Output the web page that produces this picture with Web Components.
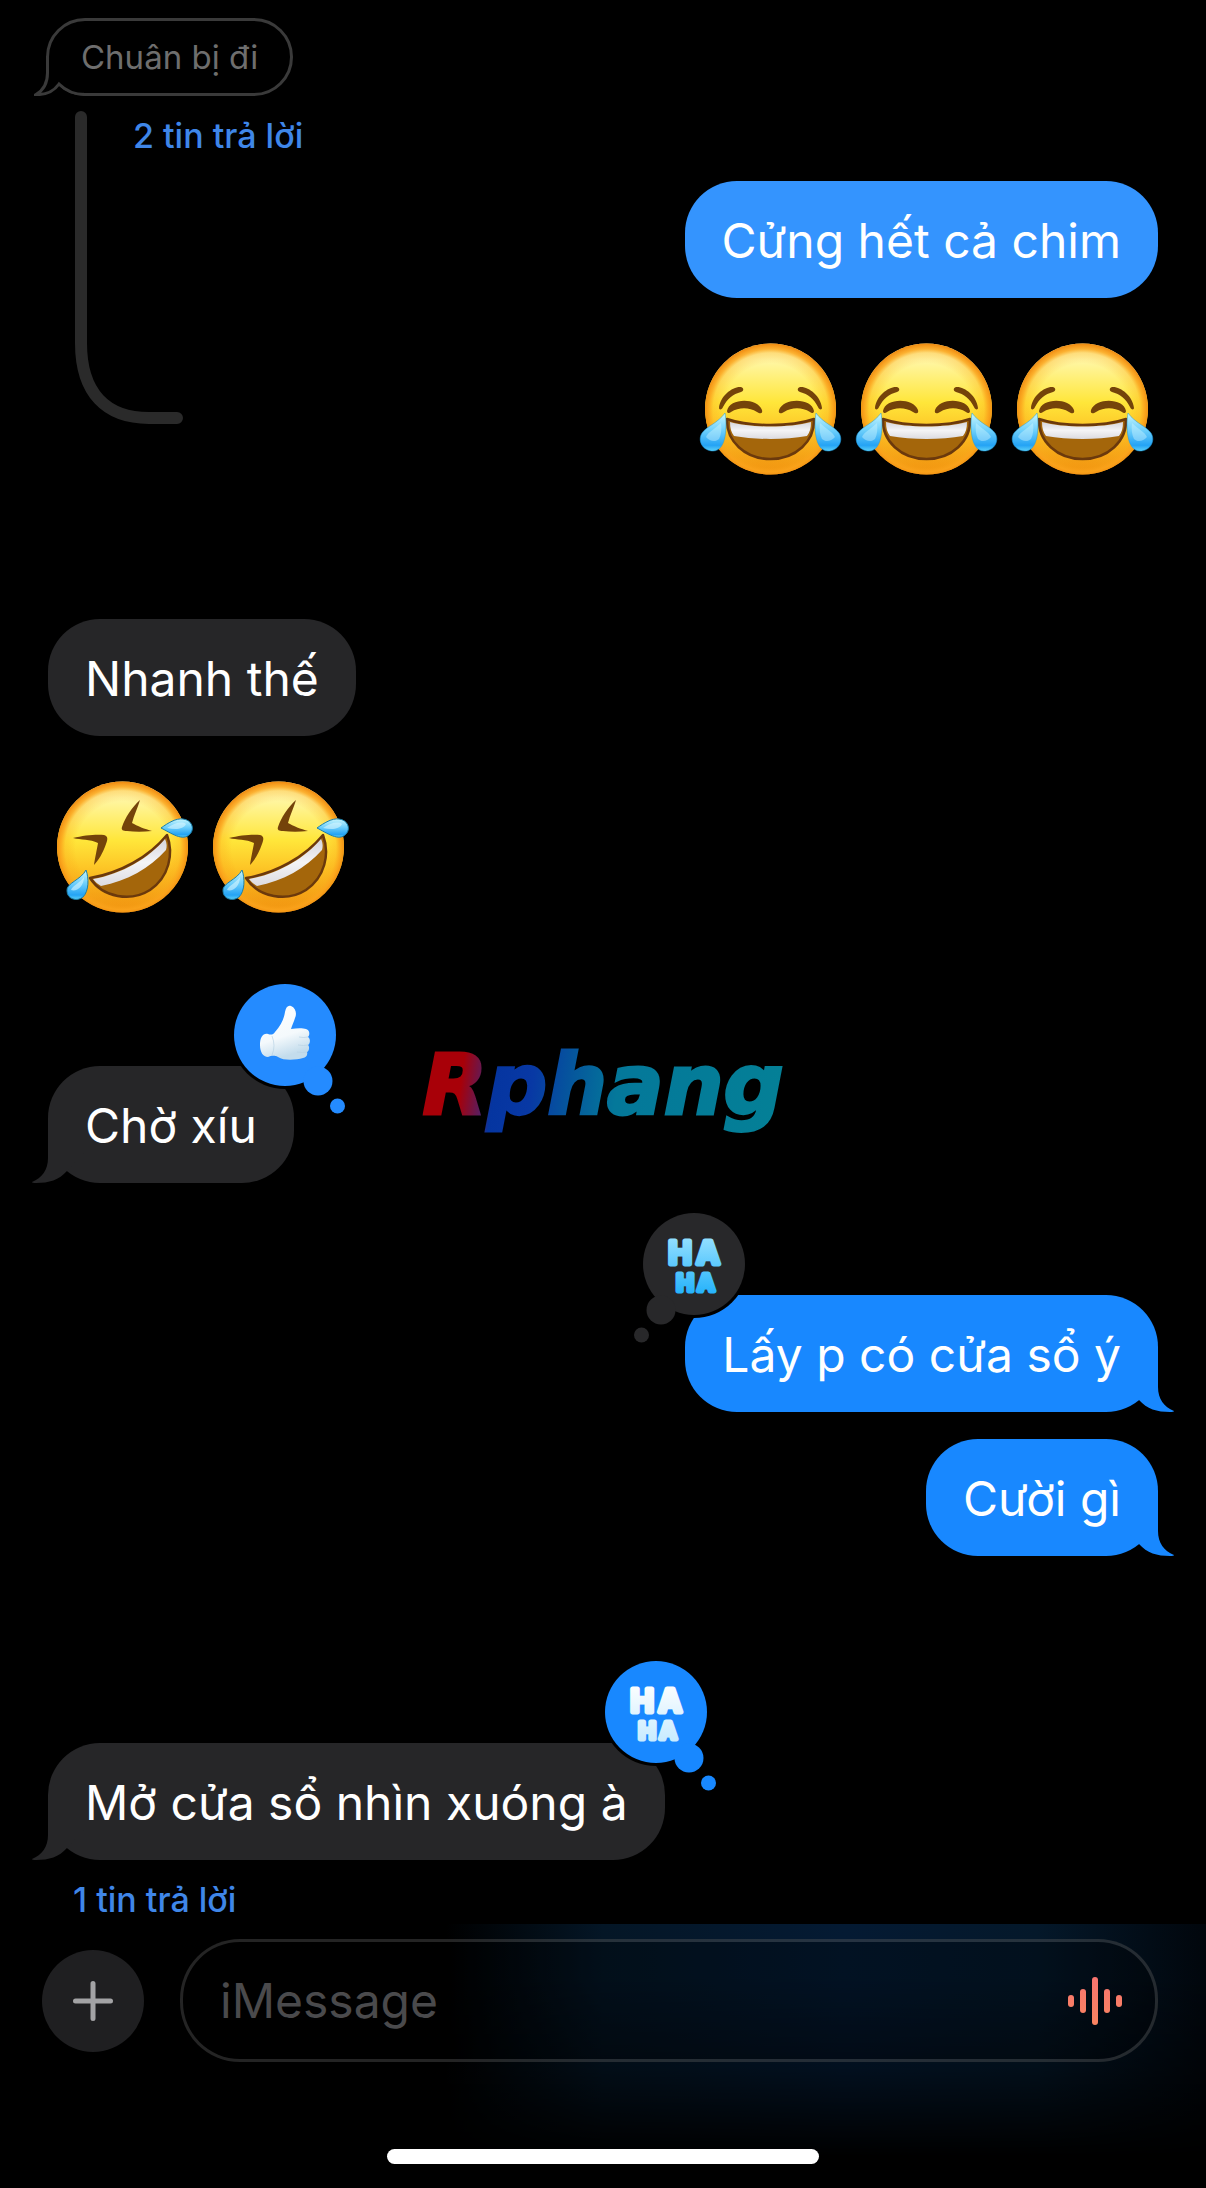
<!DOCTYPE html>
<html lang="vi">
<head>
<meta charset="utf-8">
<meta name="viewport" content="width=device-width, initial-scale=1">
<title>iMessage</title>
<style>
  html, body {
    margin: 0;
    background: #000000;
  }
  body {
    font-family: Inter, "Liberation Sans", sans-serif;
    color: #ffffff;
  }
</style>
</head>
<body>
<chat-screen>
  <chat-quote>Chuân bị đi</chat-quote>
  <chat-thread>
    <chat-note indent="far">2 tin trả lời</chat-note>
    <chat-bubble side="out" tone="light">Cửng hết cả chim</chat-bubble>
    <chat-emoji side="out" face="joy" count="3"></chat-emoji>
  </chat-thread>
  <chat-group space="wide">
    <chat-bubble side="in">Nhanh thế</chat-bubble>
    <chat-emoji side="in" face="rofl" count="2"></chat-emoji>
  </chat-group>
  <chat-group space="wider">
    <chat-bubble side="in" tail>Chờ xíu<chat-tapback slot="tapback" kind="like" side="in"></chat-tapback></chat-bubble>
  </chat-group>
  <chat-group space="normal">
    <chat-bubble side="out" tail>Lấy p có cửa sổ ý<chat-tapback slot="tapback" kind="haha" side="out"></chat-tapback></chat-bubble>
    <chat-bubble side="out" tail>Cười gì</chat-bubble>
  </chat-group>
  <chat-group space="widest">
    <chat-bubble side="in" tail>Mở cửa sổ nhìn xuóng à<chat-tapback slot="tapback" kind="haha" side="in"></chat-tapback></chat-bubble>
    <chat-note>1 tin trả lời</chat-note>
  </chat-group>
  <chat-watermark slot="over">Rphang</chat-watermark>
  <chat-composer slot="footer" placeholder="iMessage"></chat-composer>
</chat-screen>

<script>
(() => {
  const make = (html) => {
    const template = document.createElement('template');
    template.innerHTML = html;
    return template;
  };

  const define = (name, html, setup) => {
    const template = make(html);
    customElements.define(name, class extends HTMLElement {
      constructor() {
        super();
        this.attachShadow({ mode: 'open' });
        this.shadowRoot.appendChild(template.content.cloneNode(true));
      }

      connectedCallback() {
        if (setup) setup(this, this.shadowRoot);
      }
    });
  };

  define('chat-screen', `
    <style>
      :host {
        position: relative;
        display: flex;
        flex-direction: column;
        min-height: 100vh;
        overflow: hidden;
      }
      main {
        display: flex;
        flex-direction: column;
        flex: 1;
        padding: 18px 48px 4px;
      }
    </style>
    <main><slot></slot></main>
    <slot name="over"></slot>
    <slot name="footer"></slot>
  `);

  define('chat-group', `
    <style>
      :host {
        display: flex;
        flex-direction: column;
        margin-top: 112px;
      }
      :host([space="wide"]) { margin-top: 144px; }
      :host([space="wider"]) { margin-top: 153px; }
      :host([space="widest"]) { margin-top: 187px; }
      ::slotted(chat-bubble:not(:first-child)) { margin-top: 27px; }
      ::slotted(chat-note) { margin-top: 20px; }
      ::slotted(chat-emoji) { margin-top: 45px; }
    </style>
    <slot></slot>
  `);

  // the reply line runs beside the messages of the thread
  define('chat-thread', `
    <style>
      :host {
        display: grid;
        margin-top: 15px;
      }
      .line, .items { grid-area: 1 / 1; }
      .line {
        width: 108px;
        height: 313px;
        margin-left: 27px;
      }
      .items {
        display: flex;
        flex-direction: column;
        padding-top: 5px;
      }
      ::slotted(chat-bubble) { margin-top: 25px; }
      ::slotted(chat-emoji) { margin-top: 45px; }
    </style>
    <svg class="line" viewBox="0 0 108 313" aria-hidden="true">
      <path d="M6 6 V232 C6 282 31 307 74 307 H102" fill="none" stroke="#2a2a2a" stroke-width="12" stroke-linecap="round"/>
    </svg>
    <div class="items"><slot></slot></div>
  `);

  define('chat-quote', `
    <style>
      :host {
        position: relative;
        align-self: flex-start;
        box-sizing: border-box;
        margin-left: -2px;
        padding: 16px 32px;
        border: 3px solid #3a3a3a;
        border-radius: 39px;
        font-size: 33px;
        line-height: 40px;
        color: #6e6e6e;
      }
      svg {
        position: absolute;
        left: -15px;
        bottom: -3px;
        width: 54px;
        height: 42px;
      }
    </style>
    <slot></slot>
    <svg viewBox="0 0 54 42" aria-hidden="true">
      <path d="M13.500 2 V19 C13.500 30 8 37 2 40.500 C12 41 20 37 25 30 C32 37 40 40.500 51 40.500" fill="#000000" stroke="#3a3a3a" stroke-width="3"/>
    </svg>
  `);

  define('chat-bubble', `
    <style>
      :host {
        --fill: #262628;
        position: relative;
        align-self: flex-start;
        padding: 29px 37px 27px;
        border-radius: 52px;
        background: var(--fill);
        font-size: 48px;
        line-height: 61px;
      }
      :host([side="out"]) {
        --fill: #1888ff;
        align-self: flex-end;
      }
      :host([tone="light"]) { --fill: #3494fe; }
      .tail {
        display: none;
        position: absolute;
        right: -17px;
        bottom: 0;
        width: 60px;
        height: 56px;
        fill: var(--fill);
      }
      :host([tail]) .tail { display: block; }
      :host([side="in"]) .tail {
        right: auto;
        left: -17px;
        transform: scaleX(-1);
      }
    </style>
    <svg class="tail" viewBox="-43 -56 60 56" aria-hidden="true">
      <path d="M0 -54 V-25 C0 -13 6 -5 16 -1 Q16 0 12 0 C-1 0 -11 -3 -19 -12 L-36 -30 Z"/>
    </svg>
    <slot></slot>
    <slot name="tapback"></slot>
  `);

  define('chat-note', `
    <style>
      :host {
        display: flex;
        padding-left: 25px;
      }
      :host([indent="far"]) { padding-left: 85px; }
      button {
        padding: 0;
        border: 0;
        background: none;
        font: 500 34px/40px Inter, "Liberation Sans", sans-serif;
        color: #3f86e8;
        cursor: pointer;
      }
    </style>
    <button type="button"><slot></slot></button>
  `);

  const faceDefs = `
    <defs>
      <linearGradient id="skin" x1="0" y1="0" x2="0" y2="1">
        <stop offset="0" stop-color="#fff3a0"/>
        <stop offset="0.120" stop-color="#fff7a8"/>
        <stop offset="0.450" stop-color="#ffe63a"/>
        <stop offset="0.650" stop-color="#fdc727"/>
        <stop offset="1" stop-color="#ee8d0c"/>
      </linearGradient>
      <radialGradient id="rim" cx="0.500" cy="0.510" r="0.510">
        <stop offset="0.700" stop-color="#f99a12" stop-opacity="0"/>
        <stop offset="0.860" stop-color="#fba51a" stop-opacity="0.300"/>
        <stop offset="0.920" stop-color="#fba41c" stop-opacity="0.850"/>
        <stop offset="1" stop-color="#ee880e"/>
      </radialGradient>
      <linearGradient id="teeth" x1="0" y1="0" x2="0" y2="1">
        <stop offset="0" stop-color="#d6d5dc"/>
        <stop offset="0.500" stop-color="#f4f4f6"/>
        <stop offset="1" stop-color="#dcdbe0"/>
      </linearGradient>
      <linearGradient id="tear" x1="0" y1="0" x2="0" y2="1">
        <stop offset="0" stop-color="#c9f6fd"/>
        <stop offset="0.450" stop-color="#6fd0fb"/>
        <stop offset="0.850" stop-color="#24a3f5"/>
        <stop offset="1" stop-color="#5cd0f8"/>
      </linearGradient>
    </defs>
    <circle cx="70.500" cy="66" r="65.500" fill="url(#skin)"/>
    <circle cx="70.500" cy="66" r="65.500" fill="url(#rim)"/>
  `;

  const faces = {
    joy: {
      label: 'Mặt cười ra nước mắt',
      art: `
        <g id="half">
          <path d="M19 65 C20 53 33 43 41 44 C44 45 44 48 41 49 C33 51 27 56 23 64 C22 67 19 67 19 65 Z" fill="#74430a"/>
          <path d="M27 68 C29 55 57 54 62 67 C63 71 60 71 57 69 C49 64 39 64 31 69 C29 71 27 70 27 68 Z" fill="#74430a"/>
        </g>
        <use href="#half" transform="translate(141 0) scale(-1 1)"/>
        <path d="M27 76 C50 84 91 84 114 76 C115 98 96 116 70.500 116 C45 116 26 98 27 76 Z" fill="#a4660b" stroke="#6b390c" stroke-width="2.500" stroke-linejoin="round"/>
        <path d="M30 79 C52 85 89 85 111 79 C111 85 110 89 107 93 C85 97 56 97 34 93 C31 89 30 85 30 79 Z" fill="url(#teeth)"/>
        <g id="drop">
          <path d="M25 70 C27 82 27 108 13 108 C3 108 -3 98 2 90 C7 83 18 80 25 70 Z" fill="url(#tear)" stroke="#1c9be0" stroke-opacity="0.500"/>
          <path d="M21 80 C15 86 8 89 6 94 C10 99 16 99 19 96 C21 92 22 86 21 80 Z" fill="#d8f7ff" fill-opacity="0.400"/>
        </g>
        <use href="#drop" transform="translate(141 0) scale(-1 1)"/>`
    },
    rofl: {
      label: 'Cười lăn lộn',
      art: `
        <path d="M21 57 C32 54 46 53 52 54 C56 55 56 58 54 63 C51 72 46 80 42 84 C43 77 45 68 46 62 C38 58 29 59 21 57 Z" fill="#74430a"/>
        <path d="M88 19 C80 26 73 37 70 46 C69 49 71 50 75 50 C83 51 91 51 100 50 C93 48 85 45 80 42 C82 34 86 26 88 19 Z" fill="#74430a"/>
        <path d="M38 97 C68 92 97 76 115 54 C122 73 117 96 98 109 C79 121 51 117 38 97 Z" fill="#a4660b" stroke="#6b390c" stroke-width="2.500" stroke-linejoin="round"/>
        <path d="M41 98 C70 93 97 77 113 58 C115 62 115 66 114 69 C98 87 75 100 49 105 C46 103 43 101 41 98 Z" fill="url(#teeth)"/>
        <path d="M109 47 C116 42 124 37 131 38 C140 39 143 48 138 53 C131 61 119 52 109 47 Z" fill="url(#tear)" stroke="#1c7fa8"/>
        <path d="M34 89 C37 97 37 110 31 116 C25 121 15 118 15 110 C14 102 29 99 34 89 Z" fill="url(#tear)" stroke="#1c7fa8"/>
        <path d="M115 47 C122 42 130 40 134 43 C132 48 124 49 115 47 Z M32 96 C29 101 20 105 19 109 C25 111 32 105 32 96 Z" fill="#d8f7ff" fill-opacity="0.600"/>`
    }
  };

  define('chat-emoji', `
    <style>
      :host {
        display: flex;
        gap: 12px;
        align-self: flex-start;
        padding: 0 2px 0 4px;
      }
      :host([side="out"]) { align-self: flex-end; }
      svg {
        width: 144px;
        height: 132px;
        overflow: visible;
      }
    </style>
  `, (host, root) => {
    if (root.querySelector('svg')) return;
    const face = faces[host.getAttribute('face')];
    const svg = `<svg viewBox="0 0 144 132" role="img" aria-label="${face.label}">${faceDefs}${face.art}</svg>`;
    const count = Number(host.getAttribute('count')) || 1;
    root.appendChild(make(svg.repeat(count)).content);
  });

  const tapbacks = {
    like: `
      <defs>
        <linearGradient id="hand" x1="0" y1="0" x2="0.300" y2="1">
          <stop offset="0" stop-color="#ffffff"/>
          <stop offset="0.650" stop-color="#f4f9fc"/>
          <stop offset="1" stop-color="#c3dcec"/>
        </linearGradient>
      </defs>
      <path d="M26 61 C26 53 29 49 34 50 C37 51 39 51 41 48 C47 41 50 35 51 28 C52 23 54 21 57 22 C62 24 63 30 61 34 C60 38 58 41 57 45 C63 44 69 44 72 45 C76 46 76 51 74 53 C77 55 76 60 74 61 C76 63 75 67 73 68 C74 71 72 74 69 74 C62 76 50 77 44 73 C40 71 37 72 34 73 C29 73 26 68 26 61 Z" fill="url(#hand)"/>
      <path d="M65 53 Q70 54 74 53 M64 61 Q70 62 74 61 M63 68 Q69 69 73 68 M38 52 Q42 62 38 71" fill="none" stroke="#b9d3e4" stroke-opacity="0.700"/>`,
    haha: `
      <defs>
        <linearGradient id="ink" x1="0" y1="0" x2="0" y2="1">
          <stop offset="0" class="ink-top"/>
          <stop offset="1" class="ink-bottom"/>
        </linearGradient>
      </defs>
      <text class="haha"><tspan x="37 65" y="51" font-size="31">HA</tspan><tspan x="42 63" y="78" font-size="23">HA</tspan></text>`
  };

  define('chat-tapback', `
    <style>
      :host {
        --cloud: #1888ff;
        --ink-top: #ffffff;
        --ink-bottom: #c4eaff;
        position: absolute;
        top: -82px;
        left: calc(100% - 60px);
        width: 102px;
        height: 102px;
      }
      :host([kind="like"]) { --cloud: #248bff; }
      :host([side="out"]) {
        --cloud: #28282a;
        --ink-top: #9be2ff;
        --ink-bottom: #1fb0fb;
        left: -42px;
      }
      svg {
        display: block;
        width: 102px;
        height: 102px;
        overflow: visible;
      }
      .cloud { fill: var(--cloud); }
      :host([side="out"]) .puffs { transform: translate(102px, 0) scaleX(-1); }
      .ink-top { stop-color: var(--ink-top); }
      .ink-bottom { stop-color: var(--ink-bottom); }
      .haha {
        font-family: Inter, "Liberation Sans", sans-serif;
        font-weight: 700;
        line-height: 1;
        text-anchor: middle;
        fill: url(#ink);
        stroke: url(#ink);
        stroke-width: 5px;
        stroke-linejoin: round;
      }
    </style>
    <svg viewBox="0 0 102 102" role="img">
      <circle cx="51" cy="51" r="54" fill="#000000"/>
      <g class="cloud">
        <circle cx="51" cy="51" r="51"/>
        <g class="puffs">
          <circle cx="84" cy="97" r="14.500"/>
          <circle cx="103.500" cy="122" r="7.500"/>
        </g>
      </g>
      <g class="art"></g>
    </svg>
  `, (host, root) => {
    const kind = host.getAttribute('kind');
    root.querySelector('.art').innerHTML = tapbacks[kind];
    root.querySelector('svg').setAttribute('aria-label', kind === 'like' ? 'Thích' : 'Haha');
  });

  define('chat-watermark', `
    <style>
      :host {
        position: absolute;
        top: 49.6%;
        left: 50%;
        transform: translate(-50%, -50%);
        pointer-events: none;
      }
      span {
        display: block;
        font: italic 700 84px/100px "DejaVu Sans", sans-serif;
        color: transparent;
        -webkit-text-stroke: 3px transparent;
        background: linear-gradient(98deg, #a80008 0, #a80008 12%, #5c1c5c 18%, #0535a0 21%, #0838a4 31%, #05589c 42%, #04789a 54%, #048096 100%);
        -webkit-background-clip: text;
        background-clip: text;
      }
    </style>
    <span><slot></slot></span>
  `);

  define('chat-composer', `
    <style>
      :host {
        position: relative;
        display: block;
        padding: 15px 0 24px;
      }
      /* tint that the blue bubbles leave in the bar's blur */
      .glow {
        position: absolute;
        inset: 0;
        background: linear-gradient(90deg, transparent 37%, #041626 50%, #041a33 70%, #04182a 86%, #01060c 100%);
        -webkit-mask-image: linear-gradient(#000000 20%, rgba(0, 0, 0, 0.6) 55%, transparent 88%);
        mask-image: linear-gradient(#000000 20%, rgba(0, 0, 0, 0.6) 55%, transparent 88%);
      }
      form {
        position: relative;
        display: flex;
        align-items: center;
        gap: 36px;
        margin: 0;
        padding: 0 48px 0 42px;
      }
      button {
        display: grid;
        place-items: center;
        flex: none;
        padding: 0;
        border: 0;
        background: none;
        cursor: pointer;
      }
      .add {
        width: 102px;
        height: 102px;
        border-radius: 50%;
        background: #1f1f21;
      }
      .field {
        display: flex;
        align-items: center;
        flex: 1;
        box-sizing: border-box;
        min-width: 0;
        height: 123px;
        padding: 0 33px 0 37px;
        border: 3px solid rgba(255, 255, 255, 0.14);
        border-radius: 60px;
        background: rgba(0, 0, 0, 0.3);
      }
      input {
        flex: 1;
        min-width: 0;
        padding: 0;
        border: 0;
        outline: 0;
        background: none;
        font: 400 48px/61px Inter, "Liberation Sans", sans-serif;
        color: #ffffff;
      }
      input::placeholder {
        color: #4a4a4c;
        opacity: 1;
      }
      .home {
        position: relative;
        width: 432px;
        max-width: 60%;
        height: 15px;
        margin: 87px auto 0;
        border-radius: 8px;
        background: #ffffff;
      }
    </style>
    <div class="glow"></div>
    <form>
      <button class="add" type="button" aria-label="Thêm">
        <svg width="40" height="40" viewBox="0 0 40 40" aria-hidden="true">
          <path d="M20 2.500 V37.500 M2.500 20 H37.500" stroke="#a3a3a5" stroke-width="5" stroke-linecap="round"/>
        </svg>
      </button>
      <div class="field">
        <input type="text" aria-label="iMessage">
        <button class="voice" type="button" aria-label="Ghi âm">
          <svg width="54" height="48" viewBox="0 0 54 48" aria-hidden="true">
            <defs>
              <linearGradient id="wave" gradientUnits="userSpaceOnUse" x1="0" y1="0" x2="0" y2="48">
                <stop offset="0" stop-color="#f8746f"/>
                <stop offset="1" stop-color="#f98460"/>
              </linearGradient>
            </defs>
            <g fill="url(#wave)">
              <rect x="0" y="18" width="6" height="12" rx="3"/>
              <rect x="12" y="12" width="6" height="24" rx="3"/>
              <rect x="24" y="0" width="6" height="48" rx="3"/>
              <rect x="36" y="12" width="6" height="24" rx="3"/>
              <rect x="48" y="18" width="6" height="12" rx="3"/>
            </g>
          </svg>
        </button>
      </div>
    </form>
    <div class="home"></div>
  `, (host, root) => {
    root.querySelector('input').placeholder = host.getAttribute('placeholder') || '';
    root.querySelector('form').addEventListener('submit', (evt) => evt.preventDefault());
  });
})();
</script>
</body>
</html>
